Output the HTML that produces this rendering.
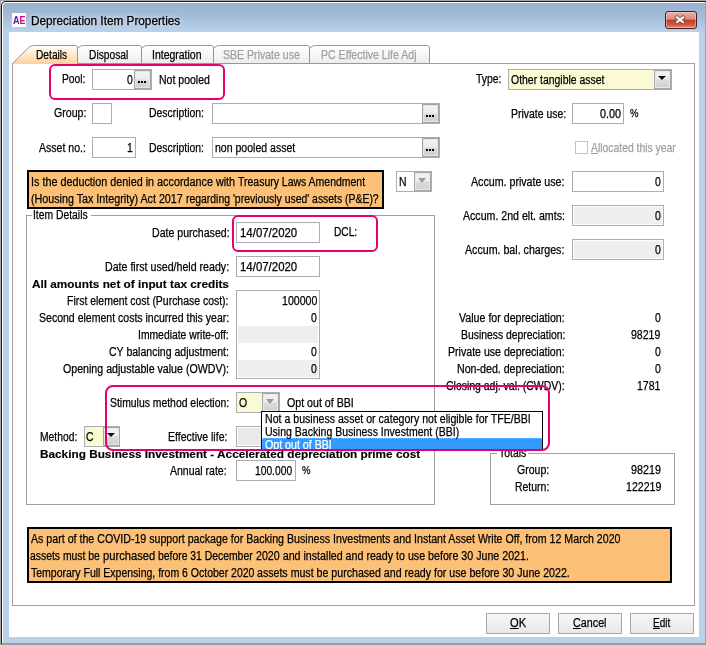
<!DOCTYPE html>
<html lang="en">
<head>
<meta charset="utf-8">
<title>Depreciation Item Properties</title>
<style>
html,body{margin:0;padding:0}
body{width:706px;height:645px;position:relative;overflow:hidden;background:#fff;font:12px/14px "Liberation Sans",sans-serif;color:#000}
.a{position:absolute;box-sizing:border-box}
.t{position:absolute;white-space:pre;-webkit-text-stroke:.25px currentColor;font:12px/14px "Liberation Sans",sans-serif;transform-origin:0 0;color:#000}
.t.b{font-weight:bold;font-size:11px;line-height:13px;-webkit-text-stroke:.15px currentColor}
.t.dis{color:#a0a0a0}
.t.ttl{text-shadow:0 0 5px rgba(255,255,255,.75),0 0 9px rgba(255,255,255,.5)}
.t.w{color:#fff}
#edge{left:0;top:0;width:720px;height:645px;background:#a8a8a8}
#corner{left:1px;top:1px;width:5px;height:5px;background:#c9dff3}
#win{left:1px;top:1px;width:720px;height:643px;background:#1c1c1c;border-radius:5px 0 0 0}
#hl{left:2px;top:2px;width:720px;height:642px;background:#fff;border-radius:4px 0 0 0}
#frame{left:3px;top:3px;width:702px;height:640px;background:linear-gradient(#98b3d0 0,#9fb9d6 10px,#b9d1ea 29px,#b9d1ea 100%);border-radius:3px 0 0 0}
#redge{left:705px;top:2px;width:1px;height:643px;background:#a3a09e}
#cy{left:2px;top:643px;width:704px;height:1px;background:#2cc3e2}
#gb{left:0;top:644px;width:706px;height:1px;background:#9c9c9c}
#client{left:9px;top:32px;width:690px;height:605px;background:#fff}
#icon{left:12px;top:13px;width:14px;height:14px;background:#fff}
#close{left:665px;top:11px;width:32px;height:18px;border:1px solid #4f1a1f;border-radius:3px;background:linear-gradient(#e8b0a4 0,#dc8c7c 45%,#c23a20 50%,#cf5a40 80%,#e08f7a 100%);box-shadow:inset 0 0 0 1px rgba(255,255,255,.35)}
#panel{left:12px;top:63px;width:683px;height:543px;border:1px solid #a0a0a0;background:#fff}
.in{position:absolute;box-sizing:border-box;border:1px solid #abadb3;background:#fff}
.y{background:#fbfbd3}
.g{background:#efefef;box-shadow:inset 0 0 0 1px #fff}
.eb{position:absolute;box-sizing:border-box;width:17px;height:19px;border:1px solid #9fa2a8;background:linear-gradient(#f4f4f4 0,#ebebeb 48%,#dcdcdc 52%,#cfcfcf 100%);box-shadow:inset 0 0 0 1px #e6e6e6}
.eb i{position:absolute;top:10px;width:2px;height:2px;background:#000}
.dd{position:absolute;box-sizing:border-box;width:17px;height:19px;border:1px solid #a3a6ad;background:linear-gradient(#f3f3f3 0,#ececec 48%,#dcdcdc 52%,#d0d0d0 100%);box-shadow:inset 0 0 0 1px #e9e9e9}
.dd b{position:absolute;left:3px;top:5px;width:0;height:0;border-left:4.5px solid transparent;border-right:4.5px solid transparent;border-top:4.5px solid #111}
.dd.off b{left:2.5px;border-left-width:4.6px;border-right-width:4.6px;border-top:5px solid #9c9c9c}
.or{position:absolute;box-sizing:border-box;border:2px solid #000;background:#fdc077}
.pk{position:absolute;box-sizing:border-box;border:2px solid #e5006b;border-radius:6px}
.gbx{position:absolute;box-sizing:border-box;border:1px solid #a0a0a0}
.btn{position:absolute;box-sizing:border-box;width:64px;height:21px;border:1px solid #a6a6a6;background:linear-gradient(#f7f7f7 0,#f0f0f0 50%,#e8e8e8 100%)}
#list{left:261px;top:411px;width:282px;height:39px;border:1px solid #000;background:#fff;overflow:hidden}
#sel{left:0;top:26px;width:280px;height:12px;background:#3399ff;border-top:1px dotted #d9a97c;border-left:1px dotted #9fb4d9}
#ae{left:1px;top:1px;font:bold 11px/12px "Liberation Sans",sans-serif;white-space:nowrap;transform:scaleX(.82);transform-origin:0 0;background:linear-gradient(90deg,#4b0f9e 0,#7a0c9a 45%,#e4007c 70%,#ee0a6e 100%);-webkit-background-clip:text;background-clip:text;color:transparent}
.ln{height:1px;background:#a0a0a0}
.t.pc{font-size:11px;line-height:13px}
</style>
</head>
<body>
<div class="a" id="edge"></div>
<div class="a" id="corner"></div>
<div class="a" id="win"></div>
<div class="a" id="hl"></div>
<div class="a" id="frame"></div>
<div class="a" id="redge"></div>
<div class="a" id="cy"></div>
<div class="a" id="gb"></div>
<div class="a" id="icon"><span class="a" id="ae">AE</span></div>
<div class="a" id="close"><svg class="a" style="left:7.3px;top:2px" width="14" height="12" viewBox="0 0 14 12"><path d="M4 3.4 L10 8.2 M10 3.4 L4 8.2" stroke="#6b3b3b" stroke-opacity=".75" stroke-width="3.8" stroke-linecap="square"/><path d="M4 3.4 L10 8.2 M10 3.4 L4 8.2" stroke="#fff" stroke-width="2" stroke-linecap="square"/></svg></div>
<div class="a" id="client"></div>
<div class="a" id="panel"></div>
<svg class="a" style="left:0;top:40px" width="706" height="26" viewBox="0 40 706 26">
<defs>
<linearGradient id="gsel" x1="0" y1="0" x2="0" y2="1"><stop offset="0" stop-color="#ffffff"/><stop offset="1" stop-color="#ffd199"/></linearGradient>
<linearGradient id="gtab" x1="0" y1="0" x2="0" y2="1"><stop offset="0" stop-color="#ffffff"/><stop offset="1" stop-color="#ececec"/></linearGradient>
</defs>
<path d="M294.5,63.5 L309.5,48.5 Q312,45.5 315.5,45.5 L427.5,45.5 Q429.5,45.5 429.5,47.5 L429.5,63.5 Z" fill="url(#gtab)" stroke="#979797"/>
<path d="M198.5,63.5 L213.5,48.5 Q216,45.5 219.5,45.5 L307.5,45.5 Q309.5,45.5 309.5,47.5 L309.5,63.5 Z" fill="url(#gtab)" stroke="#979797"/>
<path d="M126.5,63.5 L141.5,48.5 Q144,45.5 147.5,45.5 L211.5,45.5 Q213.5,45.5 213.5,47.5 L213.5,63.5 Z" fill="url(#gtab)" stroke="#979797"/>
<path d="M62.5,63.5 L77.5,48.5 Q80,45.5 83.5,45.5 L139.5,45.5 Q141.5,45.5 141.5,47.5 L141.5,63.5 Z" fill="url(#gtab)" stroke="#979797"/>
<path d="M12.5,64 L27.5,48.5 Q30,45.5 33.5,45.5 L75.5,45.5 Q77.5,45.5 77.5,47.5 L77.5,64 Z" fill="url(#gsel)" stroke="none"/>
<path d="M12.5,63.5 L27.5,48.5 Q30,45.5 33.5,45.5 L75.5,45.5 Q77.5,45.5 77.5,47.5 L77.5,63.5" fill="none" stroke="#979797"/>
</svg>

<!-- row 1 -->
<div class="in" style="left:92px;top:69px;width:60px;height:21px"></div>
<div class="eb" style="left:134px;top:70px"><i style="left:3px"></i><i style="left:6px"></i><i style="left:9px"></i></div>
<div class="in y" style="left:508px;top:69px;width:164px;height:21px"></div>
<div class="dd" style="left:654px;top:70px"><b></b></div>
<!-- row 2 -->
<div class="in" style="left:92px;top:103px;width:20px;height:21px"></div>
<div class="in" style="left:212px;top:103px;width:228px;height:21px"></div>
<div class="eb" style="left:422px;top:104px"><i style="left:3px"></i><i style="left:6px"></i><i style="left:9px"></i></div>
<div class="in" style="left:572px;top:103px;width:52px;height:21px"></div>
<!-- row 3 -->
<div class="in" style="left:92px;top:137px;width:44px;height:21px"></div>
<div class="in" style="left:212px;top:137px;width:228px;height:21px"></div>
<div class="eb" style="left:422px;top:138px"><i style="left:3px"></i><i style="left:6px"></i><i style="left:9px"></i></div>
<div class="a" style="left:575px;top:141px;width:13px;height:13px;border:1px solid #c2c2c2;background:#fff"></div>
<!-- orange 1 -->
<div class="or" style="left:27px;top:170px;width:357px;height:39px"></div>
<div class="in" style="left:396px;top:171px;width:36px;height:21px"></div>
<div class="dd off" style="left:414px;top:172px"><b></b></div>
<div class="in" style="left:572px;top:171px;width:92px;height:21px"></div>
<div class="in g" style="left:572px;top:205px;width:92px;height:21px"></div>
<div class="in g" style="left:572px;top:239px;width:92px;height:21px"></div>
<!-- item details -->
<div class="gbx" style="left:26px;top:215px;width:409px;height:290px;border-top:0"></div>
<div class="a ln" style="left:26px;top:215px;width:6px"></div><div class="a ln" style="left:91px;top:215px;width:344px"></div>
<div class="in" style="left:236px;top:222px;width:84px;height:21px"></div>
<div class="in" style="left:236px;top:256px;width:84px;height:21px"></div>
<div class="in" style="left:236px;top:290px;width:84px;height:89px"></div>
<div class="a" style="left:238px;top:326px;width:80px;height:17px;background:#eeeeee"></div>
<div class="a" style="left:238px;top:360px;width:80px;height:17px;background:#eeeeee"></div>
<div class="in y" style="left:236px;top:392px;width:44px;height:21px"></div>
<div class="dd off" style="left:262px;top:393px"><b></b></div>
<div class="in y" style="left:84px;top:426px;width:36px;height:21px"></div>
<div class="dd" style="left:103px;top:427px"><b></b></div>
<div class="in g" style="left:236px;top:426px;width:44px;height:21px;background:#e9e9e9"></div>
<div class="in" style="left:236px;top:460px;width:60px;height:21px"></div>
<!-- totals -->
<div class="gbx" style="left:490px;top:453px;width:185px;height:52px;border-top:0"></div>
<div class="a ln" style="left:490px;top:453px;width:7px"></div><div class="a ln" style="left:528px;top:453px;width:147px"></div>
<!-- orange 2 -->
<div class="or" style="left:27px;top:527px;width:645px;height:56px"></div>
<!-- buttons -->
<div class="btn" style="left:486px;top:613px"></div>
<div class="btn" style="left:558px;top:613px"></div>
<div class="btn" style="left:630px;top:613px"></div>
<span id="t0" class="t ttl" style="left:31.3px;top:14.0px;transform:scaleX(0.9811);">Depreciation Item Properties</span>
<span id="t1" class="t" style="left:36.0px;top:48.0px;transform:scaleX(0.8504);">Details</span>
<span id="t2" class="t" style="left:89.1px;top:48.0px;transform:scaleX(0.8516);">Disposal</span>
<span id="t3" class="t" style="left:152.1px;top:48.0px;transform:scaleX(0.8727);">Integration</span>
<span id="t4" class="t dis" style="left:222.5px;top:48.0px;transform:scaleX(0.8790);">SBE Private use</span>
<span id="t5" class="t dis" style="left:321.4px;top:48.0px;transform:scaleX(0.8801);">PC Effective Life Adj</span>
<span id="t6" class="t" style="left:62.4px;top:72.0px;transform:scaleX(0.8553);">Pool:</span>
<span id="t7" class="t" style="left:127.0px;top:73.0px;transform:scaleX(0.8700);">0</span>
<span id="t8" class="t" style="left:159.4px;top:73.0px;transform:scaleX(0.8769);">Not pooled</span>
<span id="t9" class="t" style="left:476.0px;top:72.0px;transform:scaleX(0.8651);">Type:</span>
<span id="t10" class="t" style="left:510.5px;top:73.0px;transform:scaleX(0.8705);">Other tangible asset</span>
<span id="t11" class="t" style="left:53.6px;top:106.0px;transform:scaleX(0.8831);">Group:</span>
<span id="t12" class="t" style="left:149.3px;top:106.0px;transform:scaleX(0.8681);">Description:</span>
<span id="t13" class="t" style="left:511.4px;top:107.0px;transform:scaleX(0.8710);">Private use:</span>
<span id="t14" class="t" style="left:600.0px;top:107.0px;transform:scaleX(0.8990);">0.00</span>
<span id="t15" class="t pc" style="left:629.8px;top:107.0px;transform:scaleX(0.8700);">%</span>
<span id="t16" class="t" style="left:39.1px;top:141.0px;transform:scaleX(0.8787);">Asset no.:</span>
<span id="t17" class="t" style="left:126.6px;top:141.0px;transform:scaleX(0.8700);">1</span>
<span id="t18" class="t" style="left:149.3px;top:141.0px;transform:scaleX(0.8681);">Description:</span>
<span id="t19" class="t" style="left:214.8px;top:141.0px;transform:scaleX(0.8774);">non pooled asset</span>
<span id="t20" class="t dis" style="left:590.6px;top:141.0px;transform:scaleX(0.8648);"><u>A</u>llocated this year</span>
<span id="t21" class="t" style="left:30.8px;top:175.0px;transform:scaleX(0.8999);">Is the deduction denied in accordance with </span>
<span id="t22" class="t" style="left:237.9px;top:175.0px;transform:scaleX(0.8727);">Treasury Laws Amendment</span>
<span id="t23" class="t" style="left:31.4px;top:192.0px;transform:scaleX(0.8934);">(Housing Tax Integrity) Act 2017 </span>
<span id="t24" class="t" style="left:186.1px;top:192.0px;transform:scaleX(0.8677);">regarding 'previously used' assets (P&amp;E)?</span>
<span id="t25" class="t" style="left:399.1px;top:175.0px;transform:scaleX(0.8700);">N</span>
<span id="t26" class="t" style="left:471.3px;top:175.0px;transform:scaleX(0.8873);">Accum. private use:</span>
<span id="t27" class="t" style="left:655.3px;top:175.0px;transform:scaleX(0.8700);">0</span>
<span id="t28" class="t" style="left:462.9px;top:209.0px;transform:scaleX(0.8831);">Accum. 2nd elt. amts:</span>
<span id="t29" class="t" style="left:655.3px;top:209.0px;transform:scaleX(0.8700);">0</span>
<span id="t30" class="t" style="left:465.4px;top:243.0px;transform:scaleX(0.8870);">Accum. bal. charges:</span>
<span id="t31" class="t" style="left:655.3px;top:243.0px;transform:scaleX(0.8700);">0</span>
<span id="t32" class="t lbl" style="left:33.2px;top:208.0px;transform:scaleX(0.8618);">Item Details</span>
<span id="t33" class="t" style="left:151.8px;top:226.0px;transform:scaleX(0.8812);">Date purchased:</span>
<span id="t34" class="t" style="left:239.8px;top:226.0px;transform:scaleX(0.9523);">14/07/2020</span>
<span id="t35" class="t" style="left:334.2px;top:225.0px;transform:scaleX(0.8485);">DCL:</span>
<span id="t36" class="t" style="left:104.8px;top:260.0px;transform:scaleX(0.8859);">Date first used/held ready:</span>
<span id="t37" class="t" style="left:239.8px;top:260.0px;transform:scaleX(0.9523);">14/07/2020</span>
<span id="t38" class="t b" style="left:32.1px;top:278.0px;transform:scaleX(1.0703);">All amounts net of input tax credits</span>
<span id="t39" class="t" style="left:67.4px;top:294.0px;transform:scaleX(0.8711);">First element cost (Purchase cost):</span>
<span id="t40" class="t" style="left:281.7px;top:294.0px;transform:scaleX(0.8840);">100000</span>
<span id="t41" class="t" style="left:38.7px;top:311.0px;transform:scaleX(0.8774);">Second element costs incurred this year:</span>
<span id="t42" class="t" style="left:311.3px;top:311.0px;transform:scaleX(0.8700);">0</span>
<span id="t43" class="t" style="left:138.2px;top:328.0px;transform:scaleX(0.8625);">Immediate write-off:</span>
<span id="t44" class="t" style="left:109.0px;top:345.0px;transform:scaleX(0.8782);">CY balancing adjustment:</span>
<span id="t45" class="t" style="left:311.3px;top:345.0px;transform:scaleX(0.8700);">0</span>
<span id="t46" class="t" style="left:62.9px;top:362.0px;transform:scaleX(0.8856);">Opening adjustable value (OWDV):</span>
<span id="t47" class="t" style="left:311.3px;top:362.0px;transform:scaleX(0.8700);">0</span>
<span id="t48" class="t" style="left:109.8px;top:396.0px;transform:scaleX(0.8668);">Stimulus method election:</span>
<span id="t49" class="t" style="left:238.8px;top:396.0px;transform:scaleX(0.8700);">O</span>
<span id="t50" class="t" style="left:287.0px;top:396.0px;transform:scaleX(0.8862);">Opt out of BBI</span>
<span id="t51" class="t" style="left:40.0px;top:430.0px;transform:scaleX(0.8603);">Method:</span>
<span id="t52" class="t" style="left:86.3px;top:430.0px;transform:scaleX(0.8700);">C</span>
<span id="t53" class="t" style="left:167.6px;top:430.0px;transform:scaleX(0.8759);">Effective life:</span>
<span id="t54" class="t b" style="left:40.0px;top:448.0px;transform:scaleX(1.0716);">Backing Business Investment - Accelerated depreciation prime cost</span>
<span id="t55" class="t" style="left:170.0px;top:464.0px;transform:scaleX(0.8746);">Annual rate:</span>
<span id="t56" class="t" style="left:255.3px;top:464.0px;transform:scaleX(0.8550);">100.000</span>
<span id="t57" class="t pc" style="left:302.1px;top:464.0px;transform:scaleX(0.8700);">%</span>
<span id="t58" class="t" style="left:459.3px;top:311.0px;transform:scaleX(0.8868);">Value for depreciation:</span>
<span id="t59" class="t" style="left:655.0px;top:311.0px;transform:scaleX(0.8700);">0</span>
<span id="t60" class="t" style="left:460.5px;top:328.0px;transform:scaleX(0.8654);">Business depreciation:</span>
<span id="t61" class="t" style="left:631.3px;top:328.0px;transform:scaleX(0.8779);">98219</span>
<span id="t62" class="t" style="left:448.4px;top:345.0px;transform:scaleX(0.8828);">Private use depreciation:</span>
<span id="t63" class="t" style="left:655.0px;top:345.0px;transform:scaleX(0.8700);">0</span>
<span id="t64" class="t" style="left:457.4px;top:362.0px;transform:scaleX(0.8862);">Non-ded. depreciation:</span>
<span id="t65" class="t" style="left:655.0px;top:362.0px;transform:scaleX(0.8700);">0</span>
<span id="t66" class="t" style="left:446.4px;top:379.0px;transform:scaleX(0.8719);">Closing adj. val. (CWDV):</span>
<span id="t67" class="t" style="left:637.2px;top:379.0px;transform:scaleX(0.8763);">1781</span>
<span id="t68" class="t lbl" style="left:498.5px;top:446.0px;transform:scaleX(0.8674);">Totals</span>
<span id="t69" class="t" style="left:517.4px;top:463.0px;transform:scaleX(0.8777);">Group:</span>
<span id="t70" class="t" style="left:631.0px;top:463.0px;transform:scaleX(0.8959);">98219</span>
<span id="t71" class="t" style="left:515.3px;top:480.0px;transform:scaleX(0.8715);">Return:</span>
<span id="t72" class="t" style="left:625.6px;top:480.0px;transform:scaleX(0.8815);">122219</span>
<span id="t73" class="t" style="left:30.8px;top:532.0px;transform:scaleX(0.8862);">As part of the COVID-19 support package for Backing Business Investments and Instant Asset Write Off, from 12 March 2020</span>
<span id="t74" class="t" style="left:30.2px;top:549.0px;transform:scaleX(0.8649);">assets must be </span>
<span id="t75" class="t" style="left:102.9px;top:549.0px;transform:scaleX(0.9306);">purchased </span>
<span id="t76" class="t" style="left:158.1px;top:549.0px;transform:scaleX(0.8648);">before 31 December </span>
<span id="t77" class="t" style="left:255.6px;top:549.0px;transform:scaleX(0.8894);">2020 and installed and ready to use before 30 June 2021.</span>
<span id="t78" class="t" style="left:30.5px;top:566.0px;transform:scaleX(0.8746);">Temporary Full Expensing, from 6 October 2020 </span>
<span id="t79" class="t" style="left:256.8px;top:566.0px;transform:scaleX(0.8846);">assets must be purchased and ready for use before 30 June 2022.</span>
<span id="t80" class="t" style="left:509.6px;top:616.0px;transform:scaleX(0.9275);"><u>O</u>K</span>
<span id="t81" class="t" style="left:572.5px;top:616.0px;transform:scaleX(0.8967);"><u>C</u>ancel</span>
<span id="t82" class="t" style="left:652.7px;top:616.0px;transform:scaleX(0.8356);"><u>E</u>dit</span>
<div class="a" id="list"><div class="a" id="sel"></div>
<span id="l0" class="t" style="left:2.5px;top:0.0px;transform:scaleX(0.8823);">Not a business asset or category not eligible for TFE/BBI</span>
<span id="l1" class="t" style="left:2.5px;top:13.0px;transform:scaleX(0.8770);">Using Backing Business Investment (BBI)</span>
<span id="l2" class="t w" style="left:2.5px;top:26.0px;transform:scaleX(0.8862);">Opt out of BBI</span>
</div>
<!-- highlight annotations -->
<div class="pk" style="left:49px;top:64px;width:176px;height:36px"></div>
<div class="pk" style="left:232px;top:215px;width:146px;height:37px"></div>
<div class="pk" style="left:105px;top:385px;width:445px;height:66px;border-radius:8px"></div>

</body>
</html>
